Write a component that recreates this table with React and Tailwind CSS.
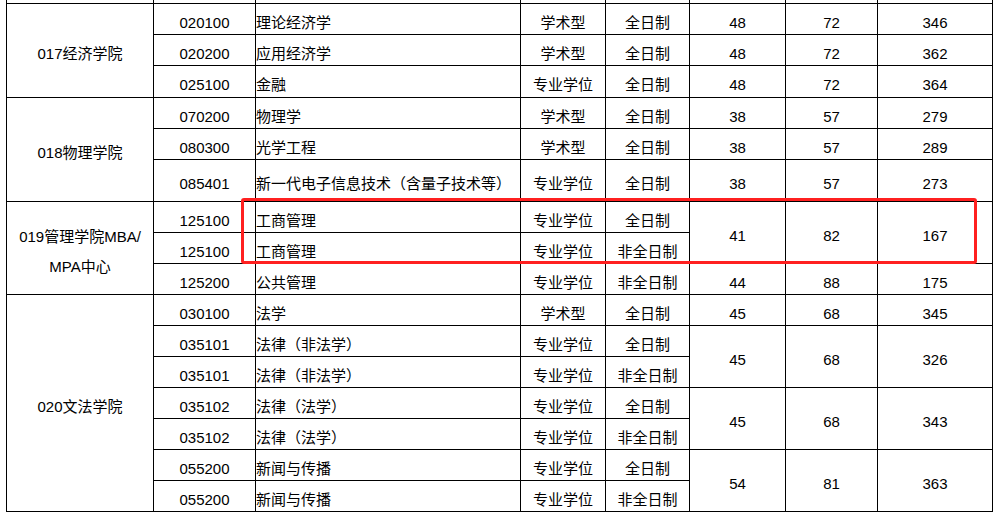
import React from "react";

const td = "border border-black p-0 pt-[8px] align-middle text-center";
const tdLeft = "border border-black p-0 pt-[8px] align-middle text-left whitespace-nowrap";

function Row({ h = "h-[31px]", college, code, name, type, mode, nums, span = 1 }) {
  return (
    <tr className={h}>
      {college}
      <td className={td}>{code}</td>
      <td className={tdLeft}>{name}</td>
      <td className={td}>{type}</td>
      <td className={td}>{mode}</td>
      {nums &&
        nums.map((n, i) => (
          <td key={i} rowSpan={span} className={td}>
            {n}
          </td>
        ))}
    </tr>
  );
}

function College({ span, children, lh = "leading-[20px]" }) {
  return (
    <td rowSpan={span} className={`${td} ${lh}`}>
      {children}
    </td>
  );
}

export default function App() {
  return (
    <div className="relative w-[996px] h-[514px] bg-white pl-[6px] font-['Liberation_Sans','Noto_Sans_CJK_SC',sans-serif] text-[15px] leading-[20px] text-black">
      <table className="table-fixed border-collapse w-[986px]">
        <colgroup>
          <col className="w-[147px]" />
          <col className="w-[102px]" />
          <col className="w-[265px]" />
          <col className="w-[85px]" />
          <col className="w-[84px]" />
          <col className="w-[96px]" />
          <col className="w-[92px]" />
          <col className="w-[115px]" />
        </colgroup>
        <tbody>
          {/* tail of the previous row */}
          <tr className="h-[3px]">
            {Array.from({ length: 8 }).map((_, i) => (
              <td key={i} className="border border-t-0 border-black p-0 leading-[0]" />
            ))}
          </tr>

          <Row college={<College span={3}>017经济学院</College>} code="020100" name="理论经济学" type="学术型" mode="全日制" nums={["48", "72", "346"]} />
          <Row code="020200" name="应用经济学" type="学术型" mode="全日制" nums={["48", "72", "362"]} />
          <Row h="h-[32px]" code="025100" name="金融" type="专业学位" mode="全日制" nums={["48", "72", "364"]} />

          <Row college={<College span={3}>018物理学院</College>} code="070200" name="物理学" type="学术型" mode="全日制" nums={["38", "57", "279"]} />
          <Row code="080300" name="光学工程" type="学术型" mode="全日制" nums={["38", "57", "289"]} />
          <Row h="h-[42px]" code="085401" name="新一代电子信息技术（含量子技术等）" type="专业学位" mode="全日制" nums={["38", "57", "273"]} />

          <Row
            college={
              <College span={3} lh="leading-[30px]">
                019管理学院MBA/
                <br />
                MPA中心
              </College>
            }
            code="125100"
            name="工商管理"
            type="专业学位"
            mode="全日制"
            nums={["41", "82", "167"]}
            span={2}
          />
          <Row code="125100" name="工商管理" type="专业学位" mode="非全日制" />
          <Row code="125200" name="公共管理" type="专业学位" mode="非全日制" nums={["44", "88", "175"]} />

          <Row college={<College span={7}>020文法学院</College>} code="030100" name="法学" type="学术型" mode="全日制" nums={["45", "68", "345"]} />
          <Row code="035101" name="法律（非法学）" type="专业学位" mode="全日制" nums={["45", "68", "326"]} span={2} />
          <Row code="035101" name="法律（非法学）" type="专业学位" mode="非全日制" />
          <Row code="035102" name="法律（法学）" type="专业学位" mode="全日制" nums={["45", "68", "343"]} span={2} />
          <Row code="035102" name="法律（法学）" type="专业学位" mode="非全日制" />
          <Row code="055200" name="新闻与传播" type="专业学位" mode="全日制" nums={["54", "81", "363"]} span={2} />
          <Row code="055200" name="新闻与传播" type="专业学位" mode="非全日制" />
        </tbody>
      </table>

      {/* red highlight around the 125100 rows */}
      <div className="absolute left-[241px] top-[198px] w-[736px] h-[66px] border-[3px] border-[#ff2020] rounded-[3px] pointer-events-none" />
    </div>
  );
}
